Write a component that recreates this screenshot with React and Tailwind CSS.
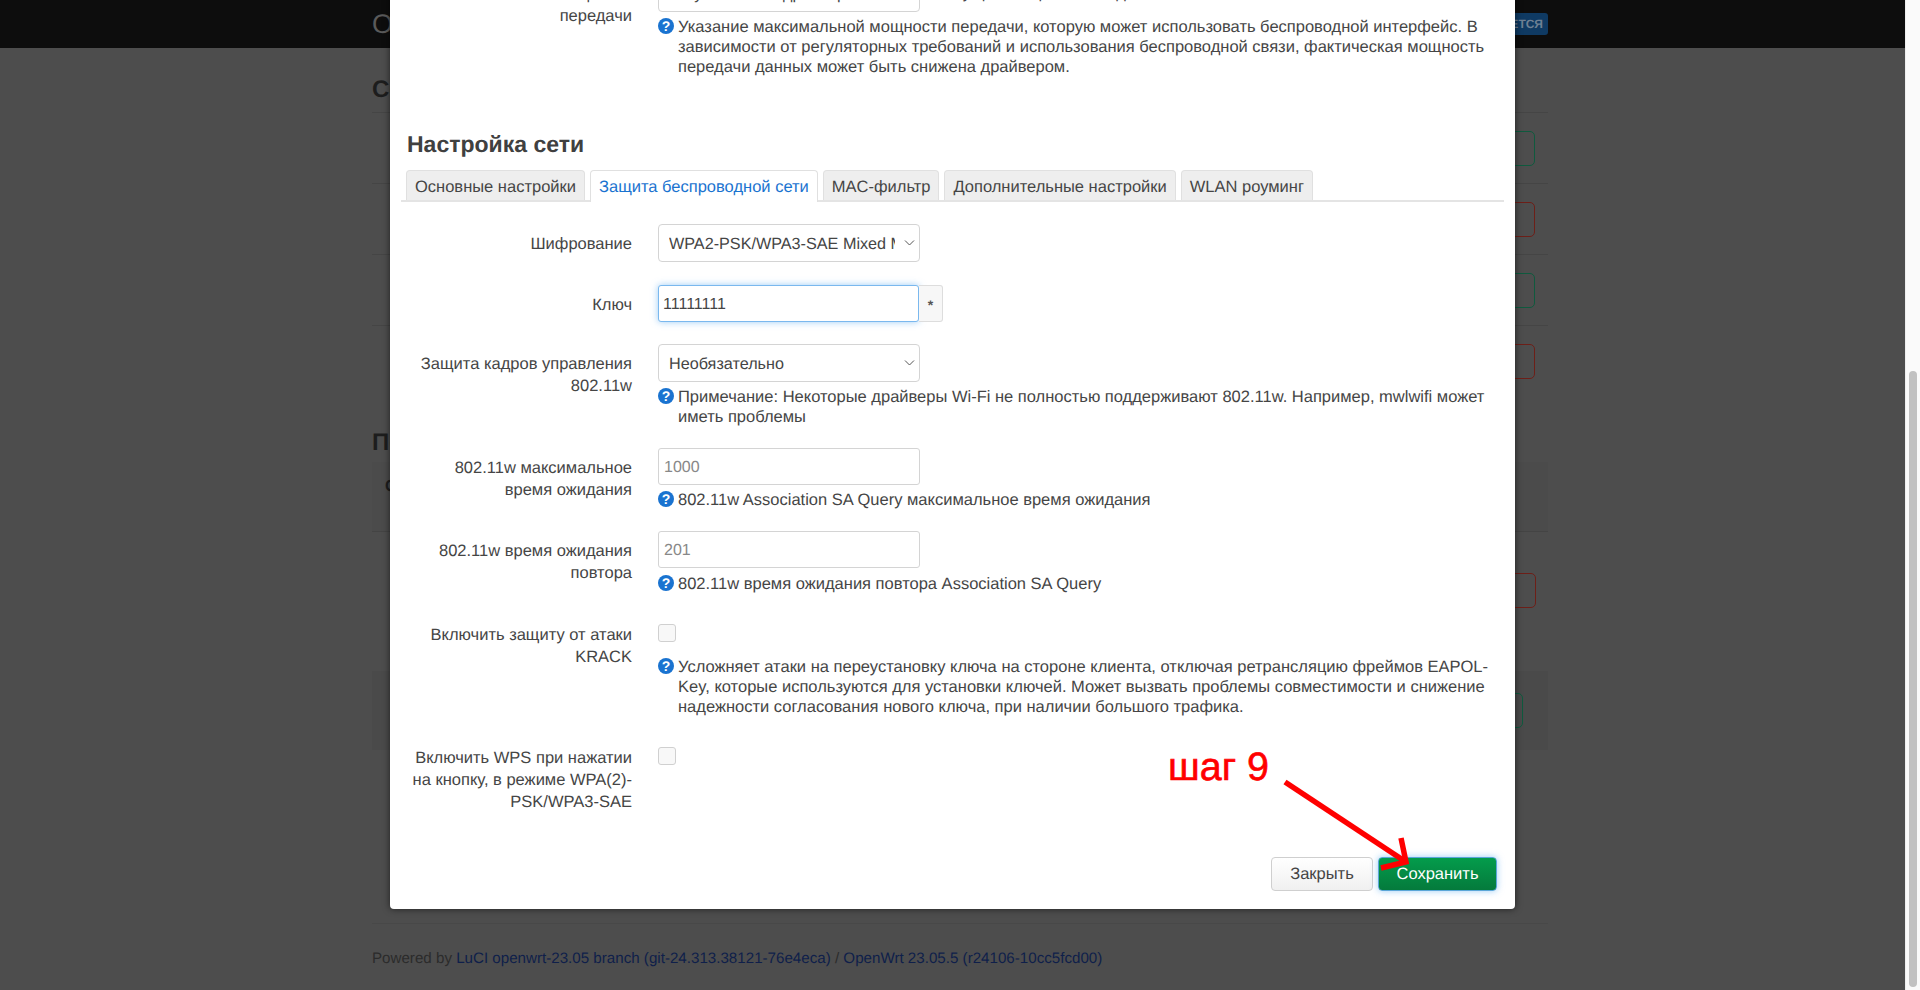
import React from "react";

function HelpIcon() {
  return (
    <span className="mt-[2px] flex h-[16px] w-[16px] shrink-0 items-center justify-center rounded-full bg-[#1a73d0] text-[14px] leading-none font-bold text-white">
      ?
    </span>
  );
}

function Help({ children, className = "" }) {
  return (
    <div className={"flex items-start gap-[4px] text-[16.5px] leading-[20px] text-[#454545] " + className}>
      <HelpIcon />
      <div className="-mb-[1px] w-[818px] pt-[1px]">{children}</div>
    </div>
  );
}

function Row({ label, children, className = "" }) {
  return (
    <div className={"flex " + className}>
      <label className="ml-[9px] w-[222px] shrink-0 pt-[8.5px] text-right text-[16.5px] leading-[22.3px] text-[#454545]">
        {label}
      </label>
      <div className="ml-[26px] min-w-0">{children}</div>
    </div>
  );
}

function Select({ value }) {
  return (
    <div className="relative w-[262px]">
      <select
        defaultValue={value}
        className="h-[38px] w-full appearance-none rounded-[4px] border border-[#d4d4d4] bg-white pl-[10px] pr-[24px] pt-[2px] text-[16.2px] text-[#454545] outline-none [text-rendering:geometricPrecision]"
      >
        <option>{value}</option>
      </select>
      <svg className="pointer-events-none absolute right-[5px] top-[15px]" width="11" height="8" viewBox="0 0 11 8" fill="none">
        <path d="M1 1.5 L5.5 6 L10 1.5" stroke="#555" strokeWidth="1" />
      </svg>
    </div>
  );
}

function NumberInput({ placeholder }) {
  return (
    <input
      placeholder={placeholder}
      className="block h-[37px] w-[262px] rounded-[3px] border border-[#d4d4d4] bg-white px-[5px] pt-[2px] text-[16px] text-[#454545] outline-none [text-rendering:geometricPrecision] placeholder:text-[#888]"
    />
  );
}

function Checkbox() {
  return <div className="mt-[9px] h-[18px] w-[18px] rounded-[3px] border border-[#d0d0d0] bg-[#f8f8f8]" />;
}

function Tab({ children, active }) {
  return (
    <div
      className={
        active
          ? "relative -mb-[2px] flex h-[32px] items-center rounded-t-[4px] border border-b-0 border-[#e0e0e0] bg-white px-[8px] pt-[1px] text-[16.5px] text-[#1a73d0]"
          : "flex h-[30px] items-center rounded-t-[4px] border border-b-0 border-[#e0e0e0] bg-[#eeeeee] px-[8px] pt-[3px] text-[16.5px] text-[#454545]"
      }
    >
      {children}
    </div>
  );
}

function BgRow({ color }) {
  return (
    <div className="flex h-[71px] items-center justify-end border-t border-[#454545] pr-[13px]">
      <div className={"h-[35px] w-[90px] rounded-[5px] border " + color} />
    </div>
  );
}

function Page() {
  return (
    <div className="h-[990px] min-w-0 flex-1 overflow-hidden bg-[#4d4d4d]">
      <div className="flex h-[48px] items-center justify-between bg-[#0d0d0d] pl-[372px] pr-[357px]">
        <span className="text-[27px] leading-none text-[#5a5a5a]">OpenWrt</span>
        <span className="rounded-[3px] bg-[#0f3a63] px-[5px] py-[2px] text-[12px] font-bold text-[#6f8194]">ПРИМЕНЯЕТСЯ</span>
      </div>

      <div className="ml-[372px] w-[1176px]">
        <h2 className="mt-[27px] h-[37px] text-[24px] leading-[30px] font-bold text-[#1d1d1d]">Сети</h2>
        <BgRow color="border-[#0f5a3e]" />
        <BgRow color="border-[#6d1f18]" />
        <BgRow color="border-[#0f5a3e]" />
        <BgRow color="border-[#6d1f18]" />

        <h2 className="mt-[32px] h-[34px] text-[24px] leading-[30px] font-bold text-[#1d1d1d]">Подключённые станции</h2>
        <div className="h-[70px] border-b border-[#444] bg-[#4b4b4b] pl-[13px] pt-[13px] text-[16px] font-bold text-[#1d1d1d]">Сеть</div>
        <div className="flex h-[139px] items-start justify-end pr-[12px] pt-[41px]">
          <div className="h-[35px] w-[90px] rounded-[5px] border border-[#6d1f18]" />
        </div>
        <div className="flex h-[79px] items-center justify-end bg-[#4a4a4a] pr-[25px]">
          <div className="h-[35px] w-[90px] rounded-[5px] border border-[#0f5a3e]" />
        </div>
        <div className="mt-[173px] border-t border-[#484848] pt-[25px] text-[15.15px] leading-[20px] text-[#2b2b2b]">
          Powered by <span className="text-[#0f1f4a]">LuCI openwrt-23.05 branch (git-24.313.38121-76e4eca)</span> / <span className="text-[#0f1f4a]">OpenWrt 23.05.5 (r24106-10cc5fcd00)</span>
        </div>
      </div>
    </div>
  );
}

function Modal() {
  return (
    <div className="absolute left-[390px] top-[-45px] w-[1125px] rounded-[4px] bg-white px-[11px] pb-[18px] pt-[20px] shadow-[0_0_7px_rgba(0,0,0,0.6)]">
      <Row label="Максимальная мощность передачи" className="-mt-[1px]">
        <div className="flex items-center gap-[17px]">
          <Select value="По умолчанию драйвера" />
          <span className="text-[16.5px] text-[#454545]">Текущая мощность: 20 дБм</span>
        </div>
        <Help className="mt-[4px]">
          Указание максимальной мощности передачи, которую может использовать беспроводной интерфейс. В зависимости от регуляторных требований и использования беспроводной связи, фактическая мощность передачи данных может быть снижена драйвером.
        </Help>
      </Row>

      <h3 className="ml-[6px] mt-[52.5px] text-[23px] leading-[30px] font-bold text-[#404040]">Настройка сети</h3>

      <div className="mt-[11.5px] flex gap-[5px] border-b-2 border-[#e4e4e4] pl-[5px]">
        <Tab>Основные настройки</Tab>
        <Tab active>Защита беспроводной сети</Tab>
        <Tab>MAC-фильтр</Tab>
        <Tab>Дополнительные настройки</Tab>
        <Tab>WLAN роуминг</Tab>
      </div>

      <Row label="Шифрование" className="mt-[22px]">
        <Select value="WPA2-PSK/WPA3-SAE Mixed Mode" />
      </Row>

      <Row label="Ключ" className="mt-[23px]">
        <div className="flex">
          <input
            defaultValue="11111111"
            className="h-[37px] w-[261px] rounded-[3px] border border-[#7ab8ee] bg-white px-[4px] pt-[2px] text-[16px] text-[#454545] shadow-[0_0_7px_rgba(90,170,240,0.6)] outline-none [text-rendering:geometricPrecision]"
          />
          <div className="flex h-[37px] w-[24px] items-center justify-center rounded-r-[3px] border border-l-0 border-[#dddddd] bg-[#f7f7f7] pt-[3px] text-[14px] font-bold text-[#555]">*</div>
        </div>
      </Row>

      <Row label="Защита кадров управления 802.11w" className="mt-[22px]">
        <Select value="Необязательно" />
        <Help className="mt-[4px]">Примечание: Некоторые драйверы Wi-Fi не полностью поддерживают 802.11w. Например, mwlwifi может иметь проблемы</Help>
      </Row>

      <Row label="802.11w максимальное время ожидания" className="mt-[22px]">
        <NumberInput placeholder="1000" />
        <Help className="mt-[4px]">802.11w Association SA Query максимальное время ожидания</Help>
      </Row>

      <Row label="802.11w время ожидания повтора" className="mt-[22px]">
        <NumberInput placeholder="201" />
        <Help className="mt-[5px]">802.11w время ожидания повтора Association SA Query</Help>
      </Row>

      <Row label="Включить защиту от атаки KRACK" className="mt-[22px]">
        <Checkbox />
        <Help className="mt-[14px]">Усложняет атаки на переустановку ключа на стороне клиента, отключая ретрансляцию фреймов EAPOL-Key, которые используются для установки ключей. Может вызвать проблемы совместимости и снижение надежности согласования нового ключа, при наличии большого трафика.</Help>
      </Row>

      <Row label="Включить WPS при нажатии на кнопку, в режиме WPA(2)-PSK/WPA3-SAE" className="mt-[22px]">
        <Checkbox />
      </Row>

      <div className="mt-[44px] flex justify-end gap-[5px] pr-[7px]">
        <button className="h-[34px] w-[102px] rounded-[4px] border border-[#cfcfcf] bg-gradient-to-b from-white to-[#f0f0f0] text-[16.5px] text-[#454545] [text-rendering:geometricPrecision]">Закрыть</button>
        <button className="h-[34px] w-[119px] rounded-[4px] border border-[#5aa6d8] bg-gradient-to-b from-[#049c4c] to-[#047a3c] text-[16.5px] text-white shadow-[0_0_7px_rgba(90,170,240,0.6)] [text-rendering:geometricPrecision]">Сохранить</button>
      </div>
    </div>
  );
}

function Annotation() {
  return (
    <>
      <div className="absolute left-[1168px] top-[744px] text-[39.5px] leading-[46px] text-[#ff0000] [-webkit-text-stroke:0.6px_#ff0000]">шаг 9</div>
      <svg className="pointer-events-none absolute left-0 top-0" width="1920" height="990" fill="none">
        <path d="M1285 782 L1406 862" stroke="#ff0000" strokeWidth="5.5" />
        <path d="M1401 838 L1406 862 L1381 868" stroke="#ff0000" strokeWidth="5.5" />
      </svg>
    </>
  );
}

export default function App() {
  return (
    <div className="relative flex h-[990px] w-[1920px] overflow-hidden font-['Liberation_Sans',Arial,sans-serif] [text-rendering:geometricPrecision]">
      <Page />
      <div className="h-[990px] w-[15px] shrink-0 border-l border-[#eeeeee] bg-[#fafafa] pl-[3px] pt-[371px]">
        <div className="h-[616px] w-[8px] rounded-full bg-[#c1c1c1]" />
      </div>
      <Modal />
      <Annotation />
    </div>
  );
}
